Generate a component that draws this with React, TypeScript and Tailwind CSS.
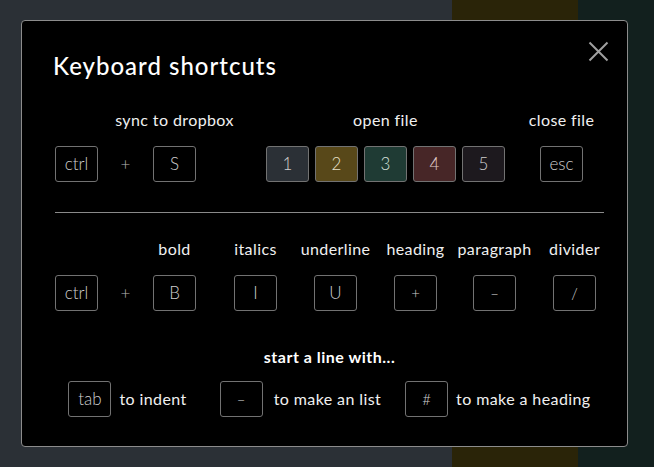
import React from "react";

const Key = ({ children, bg = "bg-black", small = false, text = "text-[#cfcfcf]" }: { children: React.ReactNode; bg?: string; small?: boolean; text?: string }) => (
  <div
    className={`w-[43px] h-[36px] shrink-0 rounded-[3px] border border-[#727272] ${bg} ${text} flex items-center justify-center font-light ${small ? "text-[15px]" : "text-[17px]"}`}
  >
    {children}
  </div>
);

const Col = ({ label, children }: { label?: string; children: React.ReactNode }) => (
  <div className="w-[43px] shrink-0 flex flex-col items-center">
    <div className="h-[20px] leading-[20px] text-[16px] tracking-[0.4px] text-[#f0f0f0] whitespace-nowrap">{label ?? "\u00a0"}</div>
    <div className="mt-[16px]">{children}</div>
  </div>
);

const Plus = () => (
  <div className="w-[55px] shrink-0 flex flex-col items-center">
    <div className="h-[20px]" />
    <div className="mt-[16px] h-[36px] flex items-center text-[17px] text-[#b8b8b8] font-light">+</div>
  </div>
);

export default function App() {
  return (
    <div className="relative w-[654px] h-[467px] overflow-hidden" style={{ fontFamily: "Lato, 'Noto Sans', sans-serif" }}>
      <div className="flex h-full">
        <div className="w-[452px] bg-[#2b3036]" />
        <div className="w-[126px] bg-[#2a2408]" />
        <div className="flex-1 bg-[#12201e]" />
      </div>

      <div className="absolute left-[21px] top-[20px] w-[607px] h-[427px] bg-black border border-[#8c8c8c] rounded-[4px] pl-[33px] pr-[24px] pt-[29px]">
        <svg className="absolute left-[566px] top-[20px]" width="21" height="21" viewBox="0 0 21 21">
          <path d="M1.5 1.5 L19.5 19.5 M19.5 1.5 L1.5 19.5" stroke="#a0a0a0" strokeWidth="2" />
        </svg>

        <div className="-ml-[2px] text-[24px] leading-[32px] font-medium tracking-[1px] text-white">Keyboard shortcuts</div>

        <div className="mt-[28px] flex">
          <Col>
            <Key>ctrl</Key>
          </Col>
          <Plus />
          <Col label="sync to dropbox">
            <Key>S</Key>
          </Col>
          <div className="ml-[70px] flex flex-col items-center">
            <div className="h-[20px] leading-[20px] text-[16px] tracking-[0.4px] text-[#f0f0f0]">open file</div>
            <div className="mt-[16px] flex gap-[6px]">
              <Key bg="bg-[#2b3036]">1</Key>
              <Key bg="bg-[#584819]" text="text-[#e6e0c8]">2</Key>
              <Key bg="bg-[#1f3b34]" text="text-[#d6e0da]">3</Key>
              <Key bg="bg-[#472627]" text="text-[#e0cccc]">4</Key>
              <Key bg="bg-[#1d191e]">5</Key>
            </div>
          </div>
          <div className="ml-[35px]">
            <Col label="close file">
              <Key>esc</Key>
            </Col>
          </div>
        </div>

        <div className="mt-[30px] h-px bg-[#8a8a8a] w-[549px]" />

        <div className="mt-[26px] flex">
          <Col>
            <Key>ctrl</Key>
          </Col>
          <Plus />
          <Col label="bold">
            <Key>B</Key>
          </Col>
          <div className="ml-[38px]">
            <Col label="italics">
              <Key>I</Key>
            </Col>
          </div>
          <div className="ml-[37px]">
            <Col label="underline">
              <Key>U</Key>
            </Col>
          </div>
          <div className="ml-[37px]">
            <Col label="heading">
              <Key small>+</Key>
            </Col>
          </div>
          <div className="ml-[36px]">
            <Col label="paragraph">
              <Key small>–</Key>
            </Col>
          </div>
          <div className="ml-[37px]">
            <Col label="divider">
              <Key small>/</Key>
            </Col>
          </div>
        </div>

        <div className="mt-[36px] w-[549px] text-center text-[16px] leading-[20px] font-bold tracking-[0.5px] text-white">start a line with...</div>

        <div className="mt-[14px] w-[549px] flex items-center justify-center">
          <Key>tab</Key>
          <span className="ml-[8px] text-[16px] tracking-[0.4px] text-[#f0f0f0]">to indent</span>
          <div className="ml-[33px]">
            <Key small>–</Key>
          </div>
          <span className="ml-[11px] text-[16px] tracking-[0.4px] text-[#f0f0f0]">to make an list</span>
          <div className="ml-[24px]">
            <Key small>#</Key>
          </div>
          <span className="ml-[8px] text-[16px] tracking-[0.4px] text-[#f0f0f0]">to make a heading</span>
        </div>
      </div>
    </div>
  );
}
